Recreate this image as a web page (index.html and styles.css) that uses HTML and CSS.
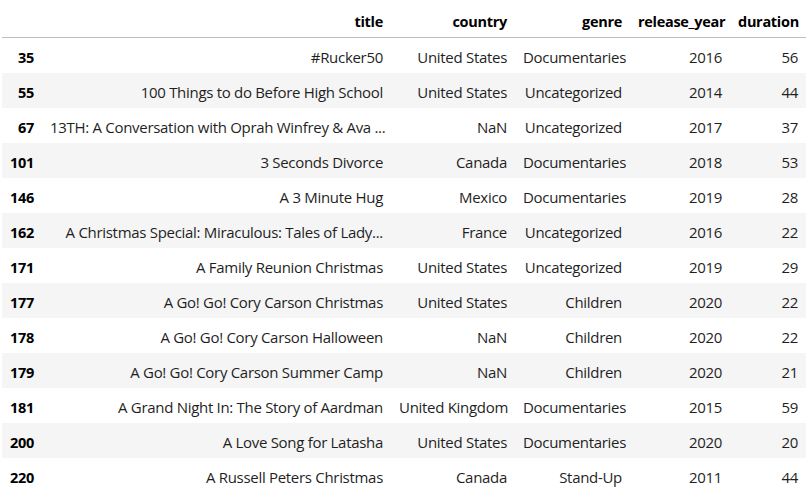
FILE: index.html
```html
<!DOCTYPE html>
<html>
<head>
<meta charset="utf-8">
<link rel="stylesheet" href="styles.css">
</head>
<body>
<table class="df">
  <colgroup>
    <col class="c-idx">
    <col class="c-title">
    <col class="c-country">
    <col class="c-genre">
    <col class="c-year">
    <col class="c-dur">
  </colgroup>
  <thead>
    <tr><th></th><th>title</th><th>country</th><th>genre</th><th>release_year</th><th>duration</th></tr>
  </thead>
  <tbody>
    <tr><th>35</th><td>#Rucker50</td><td>United States</td><td>Documentaries</td><td>2016</td><td>56</td></tr>
    <tr><th>55</th><td>100 Things to do Before High School</td><td>United States</td><td>Uncategorized</td><td>2014</td><td>44</td></tr>
    <tr><th>67</th><td>13TH: A Conversation with Oprah Winfrey &amp; Ava ...</td><td>NaN</td><td>Uncategorized</td><td>2017</td><td>37</td></tr>
    <tr><th>101</th><td>3 Seconds Divorce</td><td>Canada</td><td>Documentaries</td><td>2018</td><td>53</td></tr>
    <tr><th>146</th><td>A 3 Minute Hug</td><td>Mexico</td><td>Documentaries</td><td>2019</td><td>28</td></tr>
    <tr><th>162</th><td>A Christmas Special: Miraculous: Tales of Lady...</td><td>France</td><td>Uncategorized</td><td>2016</td><td>22</td></tr>
    <tr><th>171</th><td>A Family Reunion Christmas</td><td>United States</td><td>Uncategorized</td><td>2019</td><td>29</td></tr>
    <tr><th>177</th><td>A Go! Go! Cory Carson Christmas</td><td>United States</td><td>Children</td><td>2020</td><td>22</td></tr>
    <tr><th>178</th><td>A Go! Go! Cory Carson Halloween</td><td>NaN</td><td>Children</td><td>2020</td><td>22</td></tr>
    <tr><th>179</th><td>A Go! Go! Cory Carson Summer Camp</td><td>NaN</td><td>Children</td><td>2020</td><td>21</td></tr>
    <tr><th>181</th><td>A Grand Night In: The Story of Aardman</td><td>United Kingdom</td><td>Documentaries</td><td>2015</td><td>59</td></tr>
    <tr><th>200</th><td>A Love Song for Latasha</td><td>United States</td><td>Documentaries</td><td>2020</td><td>20</td></tr>
    <tr><th>220</th><td>A Russell Peters Christmas</td><td>Canada</td><td>Stand-Up</td><td>2011</td><td>44</td></tr>
  </tbody>
</table>
</body>
</html>
```
FILE: styles.css
```css
html, body {
  margin: 0;
  padding: 0;
  background: #ffffff;
}

body {
  padding: 2px 0 0 2px;
  font-family: "Open Sans", "Noto Sans", sans-serif;
  font-size: 15px;
  color: #1f1f1f;
}

.df {
  border-collapse: collapse;
  border-spacing: 0;
  table-layout: fixed;
  width: 804px;
}

.c-idx { width: 40px; }
.c-title { width: 349px; }
.c-country { width: 124px; }
.c-genre { width: 115px; }
.c-year { width: 100px; }
.c-dur { width: 76px; }

.df th,
.df td {
  padding: 10px 8px 6px 8px;
  height: 19px;
  line-height: 19px;
  text-align: right;
  vertical-align: middle;
  white-space: nowrap;
  overflow: hidden;
  letter-spacing: -0.3px;
}

.df thead th {
  font-size: 14.5px;
  font-weight: 700;
  letter-spacing: -0.3px;
  color: #000000;
  border-bottom: 1px solid #bdbdbd;
}

.df tbody th {
  font-size: 14.5px;
  font-weight: 700;
  color: #000000;
}

.df tbody tr:nth-child(even) {
  background: #f5f5f5;
}
```
